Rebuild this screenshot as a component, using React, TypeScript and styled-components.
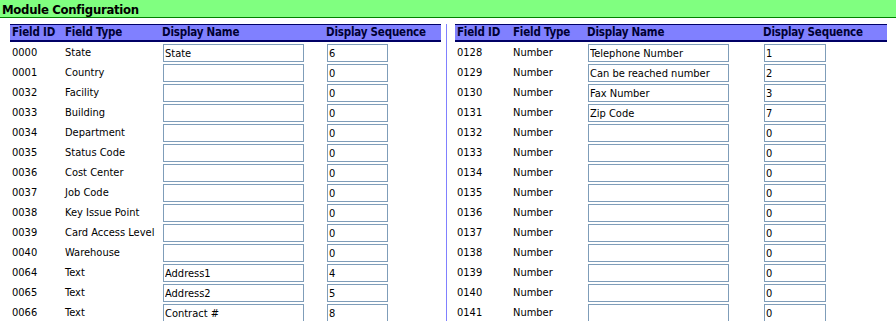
import React from "react";
import styled, { createGlobalStyle } from "styled-components";

const Global = createGlobalStyle`
  html, body { margin: 0; padding: 0; background: #ffffff; }
  body { font-family: "DejaVu Sans Condensed", "DejaVu Sans", Tahoma, sans-serif; color: #000; }
`;

const TitleBar = styled.div`
  height: 17px;
  background: #80ff80;
  border-bottom: 1px solid #008000;
  padding-left: 2px;
  font-size: 13px;
  font-weight: bold;
  line-height: 19px;
  color: #000;
  letter-spacing: -0.3px;
  white-space: nowrap;
`;

const Content = styled.div`
  display: flex;
  align-items: stretch;
  padding-left: 10px;
  margin-top: 6px;
`;

const Divider = styled.div`
  width: 1px;
  background: #8080ff;
  margin: 0 8px 0 5px;
`;

const Table = styled.table<{ $width: number }>`
  width: ${(p) => p.$width}px;
  border-collapse: collapse;
  table-layout: fixed;
  font-size: 11px;
`;

const HeadCell = styled.th`
  background: #8080ff;
  color: #000033;
  border-top: 1px solid #000066;
  border-bottom: 2px solid #000066;
  height: 15px;
  padding: 0 0 0 2px;
  text-align: left;
  font-size: 11.5px;
  font-weight: bold;
  line-height: 15px;
  white-space: nowrap;
  letter-spacing: -0.2px;
`;

const Cell = styled.td`
  height: 20px;
  box-sizing: border-box;
  padding: 2px 0 0 2px;
  font-size: 11px;
  line-height: 18px;
  white-space: nowrap;
  vertical-align: top;
`;

const InputCell = styled.td`
  height: 20px;
  padding: 2px 0 0 0;
  box-sizing: border-box;
  vertical-align: top;
`;

const Field = styled.input<{ $w: number; $ml: number }>`
  display: block;
  box-sizing: border-box;
  width: ${(p) => p.$w}px;
  height: 18px;
  margin: 0 0 0 ${(p) => p.$ml}px;
  border: 1px solid #7f9db9;
  padding: 0 1px;
  font-family: "DejaVu Sans Condensed", "DejaVu Sans", Tahoma, sans-serif;
  font-size: 11px;
  color: #000;
  background: #fff;
  outline: none;
`;

type Row = [string, string, string, string];

const leftRows: Row[] = [
  ["0000", "State", "State", "6"],
  ["0001", "Country", "", "0"],
  ["0032", "Facility", "", "0"],
  ["0033", "Building", "", "0"],
  ["0034", "Department", "", "0"],
  ["0035", "Status Code", "", "0"],
  ["0036", "Cost Center", "", "0"],
  ["0037", "Job Code", "", "0"],
  ["0038", "Key Issue Point", "", "0"],
  ["0039", "Card Access Level", "", "0"],
  ["0040", "Warehouse", "", "0"],
  ["0064", "Text", "Address1", "4"],
  ["0065", "Text", "Address2", "5"],
  ["0066", "Text", "Contract #", "8"],
];

const rightRows: Row[] = [
  ["0128", "Number", "Telephone Number", "1"],
  ["0129", "Number", "Can be reached number", "2"],
  ["0130", "Number", "Fax Number", "3"],
  ["0131", "Number", "Zip Code", "7"],
  ["0132", "Number", "", "0"],
  ["0133", "Number", "", "0"],
  ["0134", "Number", "", "0"],
  ["0135", "Number", "", "0"],
  ["0136", "Number", "", "0"],
  ["0137", "Number", "", "0"],
  ["0138", "Number", "", "0"],
  ["0139", "Number", "", "0"],
  ["0140", "Number", "", "0"],
  ["0141", "Number", "", "0"],
];

interface Layout {
  width: number;
  cols: [number, number, number, number];
  nameW: number;
  nameMl: number;
  seqW: number;
  seqMl: number;
}

const FieldTable: React.FC<{ rows: Row[]; layout: Layout }> = ({ rows, layout }) => (
  <Table $width={layout.width}>
    <colgroup>
      {layout.cols.map((w, i) => (
        <col key={i} style={{ width: w }} />
      ))}
    </colgroup>
    <thead>
      <tr>
        <HeadCell>Field ID</HeadCell>
        <HeadCell>Field Type</HeadCell>
        <HeadCell>Display Name</HeadCell>
        <HeadCell>Display Sequence</HeadCell>
      </tr>
    </thead>
    <tbody>
      {rows.map((r) => (
        <tr key={r[0]}>
          <Cell>{r[0]}</Cell>
          <Cell>{r[1]}</Cell>
          <InputCell>
            <Field $w={layout.nameW} $ml={layout.nameMl} defaultValue={r[2]} />
          </InputCell>
          <InputCell>
            <Field $w={layout.seqW} $ml={layout.seqMl} defaultValue={r[3]} />
          </InputCell>
        </tr>
      ))}
    </tbody>
  </Table>
);

const leftLayout: Layout = {
  width: 431,
  cols: [53, 97, 164, 117],
  nameW: 141,
  nameMl: 3,
  seqW: 61,
  seqMl: 3,
};

const rightLayout: Layout = {
  width: 432,
  cols: [56, 74, 176, 126],
  nameW: 141,
  nameMl: 3,
  seqW: 62,
  seqMl: 3,
};

export default function App() {
  return (
    <>
      <Global />
      <TitleBar>Module Configuration</TitleBar>
      <Content>
        <FieldTable rows={leftRows} layout={leftLayout} />
        <Divider />
        <FieldTable rows={rightRows} layout={rightLayout} />
      </Content>
    </>
  );
}
